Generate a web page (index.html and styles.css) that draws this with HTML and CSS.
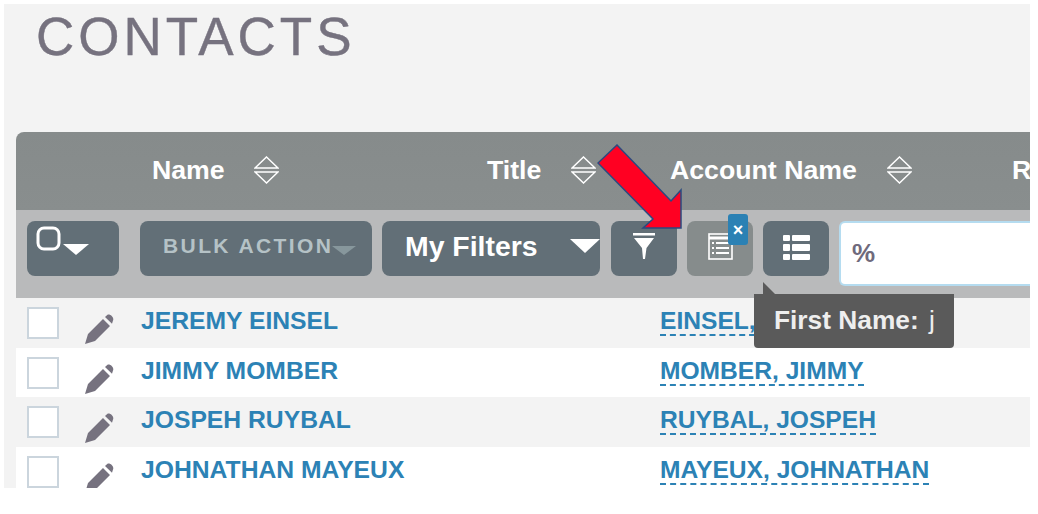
FILE: index.html
```html
<!DOCTYPE html>
<html lang="en">
<head>
  <meta charset="UTF-8">
  <title>Contacts</title>
  <link rel="stylesheet" href="styles.css">
</head>
<body>

  <div class="panel">
    <h1 class="page-title">CONTACTS</h1>

    <div class="table">
      <div class="head">
        <div class="col col-name">Name
          <svg class="sort" viewBox="0 0 25 28"><path d="M12.5 1 L24 12 H1 Z M1 16 H24 L12.5 27 Z"/></svg>
        </div>
        <div class="col col-title">Title
          <svg class="sort" viewBox="0 0 25 28"><path d="M12.5 1 L24 12 H1 Z M1 16 H24 L12.5 27 Z"/></svg>
        </div>
        <div class="col col-account">Account Name
          <svg class="sort" viewBox="0 0 25 28"><path d="M12.5 1 L24 12 H1 Z M1 16 H24 L12.5 27 Z"/></svg>
        </div>
        <div class="col">Role</div>
      </div>

      <div class="toolbar">
        <div class="btn btn-select">
          <svg width="54" height="30" viewBox="0 0 54 30"><rect x="2" y="2" width="21" height="21" rx="6" fill="none" stroke="#fff" stroke-width="3"/><path d="M27 18 H53 L40 29 Z" fill="#fff"/></svg>
        </div>
        <div class="btn btn-bulk">BULK ACTION<span class="caret caret-dim"></span></div>
        <div class="btn btn-filters">My Filters<span class="caret caret-big"></span></div>
        <div class="btn btn-icon">
          <svg width="22" height="26" viewBox="0 0 22 26" fill="#fff"><rect x="0" y="0" width="22" height="2.500"/><path d="M1 5 H21 L13.500 15 L12 26 L10 26 L9 15 Z"/></svg>
        </div>
        <div class="btn btn-icon btn-off">
          <svg width="25" height="27" viewBox="0 0 25 27"><rect x="1" y="1" width="23" height="25" fill="none" stroke="#fff" stroke-width="1.6"/><path d="M1 5 H24" stroke="#fff" stroke-width="3"/><path d="M4 10 H6 M8 10 H21 M4 15 H6 M8 15 H21 M4 20 H6 M8 20 H21" stroke="#fff" stroke-width="2"/></svg>
          <span class="badge">×</span>
        </div>
        <div class="btn btn-icon btn-list">
          <svg width="27" height="25" viewBox="0 0 27 25" fill="#fff"><rect x="0" y="0" width="7" height="6" rx="1"/><rect x="9" y="0" width="18" height="6" rx="1"/><rect x="0" y="9" width="7" height="7" rx="1"/><rect x="9" y="9" width="18" height="7" rx="1"/><rect x="0" y="19" width="7" height="6" rx="1"/><rect x="9" y="19" width="18" height="6" rx="1"/></svg>
        </div>
        <div class="search">%</div>
      </div>

      <div class="row">
        <span class="check"></span>
        <svg class="pencil" viewBox="0 0 30 30"><path d="M0 30 L3 20 L18 5 L25 12 L10 27 Z M20 3 L22.500 0.800 C25 -0.500 29.500 3.500 28 6.500 L27 9.800 Z"/></svg>
        <a class="name">JEREMY EINSEL</a>
        <a class="account">EINSEL, JEREMY</a>
      </div>
      <div class="row">
        <span class="check"></span>
        <svg class="pencil" viewBox="0 0 30 30"><path d="M0 30 L3 20 L18 5 L25 12 L10 27 Z M20 3 L22.500 0.800 C25 -0.500 29.500 3.500 28 6.500 L27 9.800 Z"/></svg>
        <a class="name">JIMMY MOMBER</a>
        <a class="account">MOMBER, JIMMY</a>
      </div>
      <div class="row">
        <span class="check"></span>
        <svg class="pencil" viewBox="0 0 30 30"><path d="M0 30 L3 20 L18 5 L25 12 L10 27 Z M20 3 L22.500 0.800 C25 -0.500 29.500 3.500 28 6.500 L27 9.800 Z"/></svg>
        <a class="name">JOSPEH RUYBAL</a>
        <a class="account">RUYBAL, JOSPEH</a>
      </div>
      <div class="row">
        <span class="check"></span>
        <svg class="pencil" viewBox="0 0 30 30"><path d="M0 30 L3 20 L18 5 L25 12 L10 27 Z M20 3 L22.500 0.800 C25 -0.500 29.500 3.500 28 6.500 L27 9.800 Z"/></svg>
        <a class="name">JOHNATHAN MAYEUX</a>
        <a class="account">MAYEUX, JOHNATHAN</a>
      </div>
    </div>

    <div class="tooltip"><b>First Name:</b> <span class="tip-value">j</span></div>

    <svg class="arrow" width="100" height="100" viewBox="0 0 100 100">
      <path d="M20 1 L74 57 L84 46 V84 H46 L56 75 L1 19 Z"/>
    </svg>
  </div>

</body>
</html>
```

FILE: styles.css
```css
body {
  margin: 0;
  background-color: #fff;
  font-family: 'Liberation Sans', Arial, sans-serif;
}

.panel {
  position: relative;
  width: 1026px;
  height: 484px;
  margin: 4px 0 0 4px;
  background-color: #f3f3f3;
  overflow: hidden;
}

.page-title {
  height: 128px;
  margin: 0;
  padding: 2px 0 0 32px;
  box-sizing: border-box;
  font-size: 53px;
  line-height: 61px;
  font-weight: normal;
  letter-spacing: 4px;
  color: #76727f;
  -webkit-text-stroke: 0.4px #76727f;
}

.table {
  margin-left: 12px;
}

.head {
  display: flex;
  align-items: center;
  height: 78px;
  padding: 0 0 2px 136px;
  box-sizing: border-box;
  background: linear-gradient(#868b8b, #898e8e);
  border-radius: 8px 0 0 0;
  color: #fff;
  font-size: 26.7px;
  font-weight: bold;
  white-space: nowrap;
  overflow: hidden;
}

.col {
  display: flex;
  align-items: center;
  flex-shrink: 0;
}

.col-name { width: 335px; gap: 29px; }
.col-title { width: 183px; gap: 30px; }
.col-account { width: 342px; gap: 30px; }

.sort {
  width: 25px;
  height: 28px;
  fill: none;
  stroke: #fff;
  stroke-width: 1.5;
}

.toolbar {
  display: flex;
  align-items: flex-start;
  gap: 10px;
  height: 88px;
  padding: 11px 0 0 11px;
  box-sizing: border-box;
  background-color: #b9babb;
}

.btn {
  position: relative;
  display: flex;
  align-items: center;
  justify-content: center;
  flex-shrink: 0;
  height: 55px;
  box-sizing: border-box;
  background-color: #626f77;
  border-radius: 8px;
  color: #fff;
  font-weight: bold;
}

.btn-select {
  width: 92px;
  margin-right: 11px;
  align-items: flex-start;
  justify-content: flex-start;
  padding: 5px 0 0 9px;
}

.btn-bulk {
  width: 232px;
  justify-content: flex-start;
  padding: 0 0 5px 23px;
  font-size: 21px;
  letter-spacing: 2.4px;
  color: #b5c2c6;
}

.btn-filters {
  width: 218px;
  margin-right: 1px;
  justify-content: space-between;
  padding: 0 0 5px 23px;
  font-size: 28.4px;
}

.btn-icon {
  width: 66px;
  padding-bottom: 5px;
}

.btn-list {
  padding-bottom: 2px;
}

.btn-off {
  background-color: #868c8c;
}

.caret {
  width: 0;
  height: 0;
  border-style: solid;
  border-color: transparent;
}

.caret-dim {
  margin: 8px 0 0 -1px;
  border-width: 9px 12px 0;
  border-top-color: #87979c;
}

.caret-big {
  border-width: 14px 15px 0;
  border-top-color: #fff;
}

.badge {
  position: absolute;
  top: -7px;
  left: 41px;
  width: 20px;
  height: 31px;
  background-color: #2b81b4;
  border-radius: 3px;
  text-align: center;
  font-size: 18px;
  line-height: 33px;
  color: #fff;
}

.search {
  flex: 1;
  height: 65px;
  padding-left: 11px;
  box-sizing: border-box;
  background-color: #fff;
  border: 2px solid #b5dcf0;
  border-right: none;
  border-radius: 6px 0 0 6px;
  font-size: 26px;
  font-weight: bold;
  line-height: 61px;
  color: #6f6a7c;
}

.row {
  display: flex;
  align-items: flex-start;
  height: 49.5px;
  padding-left: 11px;
  box-sizing: border-box;
  background-color: #fff;
  white-space: nowrap;
}

.row:nth-of-type(odd) {
  background-color: #f3f3f3;
}

.check {
  flex-shrink: 0;
  width: 32px;
  height: 32px;
  margin: 9px 26px 0 0;
  box-sizing: border-box;
  background-color: #fff;
  border: 2px solid #cbd5dd;
}

.pencil {
  flex-shrink: 0;
  width: 30px;
  height: 30px;
  margin: 16px 26px 0 0;
  fill: #76727f;
}

.name,
.account {
  font-weight: bold;
  line-height: 28px;
  color: #2c82b5;
}

.name {
  flex-shrink: 0;
  width: 519px;
  margin-top: 9px;
  font-size: 24.7px;
}

.account {
  margin-top: 9px;
  height: 27px;
  font-size: 24.6px;
  border-bottom: 2px dashed #2c82b5;
}

.tooltip {
  position: absolute;
  left: 750px;
  top: 290px;
  width: 200px;
  height: 54px;
  padding-left: 20px;
  box-sizing: border-box;
  background-color: #5a5a5a;
  border-radius: 0 0 4px 4px;
  font-size: 26.3px;
  line-height: 52px;
  color: #eee;
}

.tip-value {
  margin-left: 3px;
}

.tooltip::before {
  content: "";
  position: absolute;
  left: 9px;
  top: -12px;
  border-style: solid;
  border-width: 12px 0 0 12px;
  border-color: transparent transparent transparent #5a5a5a;
}

.arrow {
  position: absolute;
  left: 593px;
  top: 140px;
  fill: #ff0022;
  stroke: #2a4a80;
  stroke-width: 1.5;
}
```
